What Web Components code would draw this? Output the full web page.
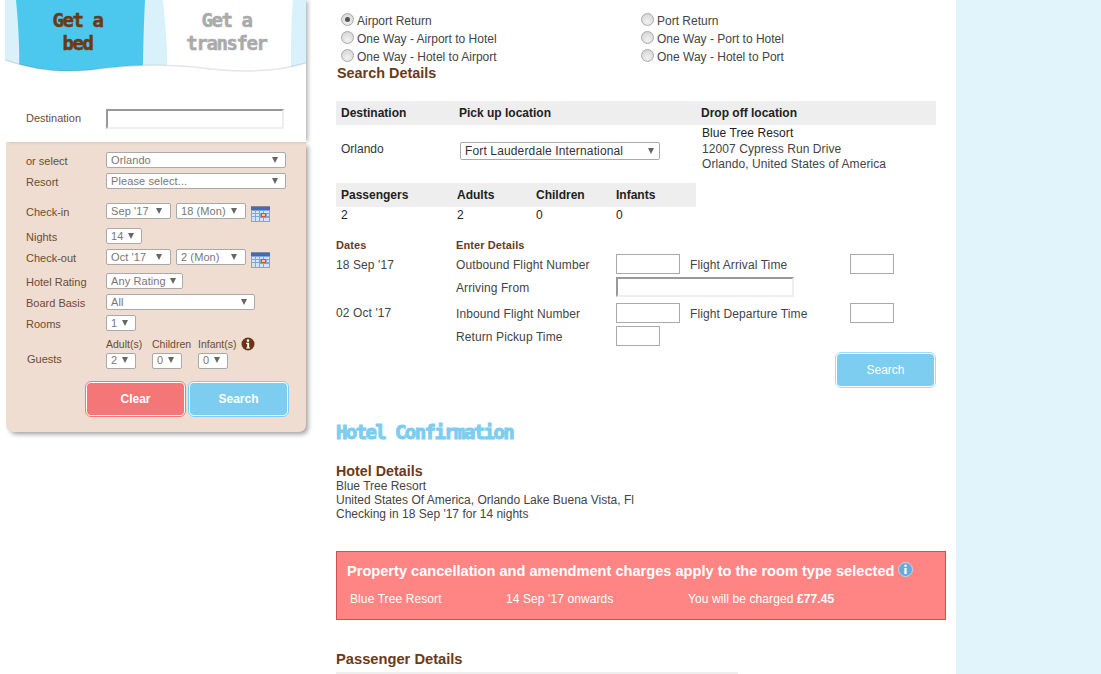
<!DOCTYPE html>
<html><head><meta charset="utf-8"><style>
html,body{margin:0;padding:0;height:674px;overflow:hidden;background:#fff;font-family:"Liberation Sans",Arial,sans-serif}
</style></head><body>
<x-page>
  <x-sidebar slot="side"></x-sidebar>
  <x-main slot="main"></x-main>
</x-page>
<script>
function def(name,html){customElements.define(name,class extends HTMLElement{connectedCallback(){if(this.shadowRoot)return;const s=this.attachShadow({mode:'open'});s.innerHTML=typeof html==='function'?html(this):html;}});}

def('x-page',`<style>:host{display:flex;width:1101px;height:674px;overflow:hidden}
.side{flex:0 0 336px}.main{flex:0 0 620px}.right{flex:1;background:#e1f3fb}</style>
<div class="side"><slot name="side"></slot></div><div class="main"><slot name="main"></slot></div><div class="right"></div>`);

def('x-select',h=>{const w=h.getAttribute('w'),t=h.getAttribute('t');const a=h.getAttribute('a')||8;const big=h.hasAttribute('big');
return `<style>:host{display:block;flex:none}
.s{box-sizing:border-box;width:${w}px;height:${big?18:16}px;border:1px solid #a9a9a9;border-radius:2px;background:#fff;display:flex;align-items:center;justify-content:space-between;padding:0 ${a}px 0 4px;font:${big?12:11}px/14px "Liberation Sans",Arial,sans-serif;color:${big?'#333':'#777'};white-space:nowrap;${big?'letter-spacing:.14px;':'padding-bottom:1px;letter-spacing:.1px;'}}
i{width:0;height:0;border-left:3.5px solid transparent;border-right:3.5px solid transparent;border-top:6.5px solid #666;flex:none}</style>
<div class="s"><span>${t}</span><i></i></div>`});

def('x-row',h=>`<style>:host{display:flex;align-items:flex-start;height:16px;padding-left:26px;margin-top:${h.getAttribute('mt')||0}px}
.l{flex:0 0 80px;font:11px/16px "Liberation Sans",Arial,sans-serif;color:#6d4c33;padding-top:1px}.c{display:flex;gap:5px}</style>
<div class="l">${h.getAttribute('label')}</div><div class="c"><slot></slot></div>`);

def('x-calendar',`<style>:host{display:block;flex:none;margin-top:3px;height:16px}svg{display:block}</style>
<svg width="19" height="16" viewBox="0 0 19 16"><rect width="19" height="16" fill="#7fa6dc"/><rect y="0" width="19" height="1" fill="#889"/><rect y="1" width="19" height="3" fill="#3f6cb4"/>
<g fill="#d5e3f6"><rect x="1" y="5" width="3" height="2"/><rect x="5" y="5" width="3" height="2"/><rect x="9" y="5" width="3" height="2"/><rect x="13" y="5" width="5" height="2"/><rect x="1" y="8" width="3" height="2"/><rect x="5" y="8" width="3" height="2"/><rect x="1" y="11" width="3" height="4"/><rect x="5" y="11" width="3" height="4"/><rect x="9" y="12" width="3" height="3"/><rect x="16" y="8" width="2" height="2"/><rect x="13" y="12" width="5" height="3"/></g>
<rect x="10.500" y="7.500" width="4" height="3" fill="#f6c9a8" stroke="#d9502e"/></svg>`);

def('x-btn',h=>{const c=h.getAttribute('c'),e=h.getAttribute('e');const bold=h.hasAttribute('bold');return `<style>:host{display:block;flex:none}
.o{box-sizing:border-box;width:${h.getAttribute('w')||101}px;height:36px;border:1px solid ${e};border-radius:6px;padding:1px;background:#fff}
.b{box-sizing:border-box;height:100%;border-radius:4px;background:${c};color:#fff;font:${bold?'bold':'normal'} 12px/32px "Liberation Sans",Arial,sans-serif;text-align:center;}</style>
<div class="o"><div class="b"><slot></slot></div></div>`});

def('x-sidebar',`<style>:host{display:block;width:336px;height:674px;font-family:"Liberation Sans",Arial,sans-serif}
.panel{margin-left:5px;width:301px;position:relative}
.tabs{position:relative;height:142px;box-shadow:3px 0 4px -1px rgba(0,0,0,.3)}
.tabs svg{position:absolute;left:0;top:0}
.tt{position:relative;display:flex;padding-top:9px}
.t{font:bold 19px/23px "DejaVu Sans Mono",monospace;letter-spacing:-1.4px;text-align:center;-webkit-text-stroke:.5px currentColor;white-space:nowrap}
.t1{width:145px;color:#6b3a14}.t2{width:123px;margin-left:15px;color:#aaa}
.dest{position:absolute;left:0;top:109px;display:flex;padding-left:21px}
.dest label{flex:0 0 80px;font:11px/19px "Liberation Sans",Arial,sans-serif;color:#6d4c33}
.inp{box-sizing:border-box;width:178px;height:20px;border:2px solid;border-color:#999 #eee #eee #999;background:#fff}
.body{margin-left:1px;width:300px;height:290px;background:#eeddd0;border-radius:0 0 7px 7px;box-shadow:3px 3px 5px -1px rgba(0,0,0,.4);padding-top:10px;box-sizing:border-box}
x-row{margin-left:-6px}
.g{display:flex;height:31px;margin-top:6.500px;padding-left:20px}
.g .gl{flex:0 0 79px;padding-left:1px;font:11px/13px "Liberation Sans",Arial,sans-serif;color:#6d4c33;padding-top:15px}
.gc{display:flex;gap:16px}.gc>div{width:30px}
.gc span{display:block;font:10.500px/12px "Liberation Sans",Arial,sans-serif;color:#6d4c33;white-space:nowrap;height:15px}
.info{position:relative}
.info svg{position:absolute;left:43px;top:-1px}
.btns{display:flex;gap:2px;padding-left:79px;margin-top:12px}
</style>
<div class="panel">
 <div class="tabs">
  <svg width="301" height="142" viewBox="0 0 301 142"><rect width="301" height="142" fill="#fff"/>
   <rect width="301" height="72" fill="#d9f1fa"/>
   <path d="M11 0 C13 20 15 50 14 72 L138 72 C138 50 139 20 140 0Z" fill="#4cc8ee"/>
   <path d="M158 0 C160 20 163 50 162 72 L286 72 C286 50 286 20 288 0Z" fill="#fff"/>
   <path d="M0 60 C30 70 55 73 85 70 C115 66 150 63 190 67 C225 72 265 74 301 63 L301 142 L0 142Z" fill="#fff"/>
   <path d="M0 60 C30 70 55 73 85 70 C115 66 150 63 190 67 C225 72 265 74 301 63" fill="none" stroke="#000" stroke-opacity=".1" stroke-width="1.500"/>
  </svg>
  <div class="tt"><div class="t t1">Get a<br>bed</div><div class="t t2">Get a<br>transfer</div></div>
  <div class="dest"><label>Destination</label><div class="inp"></div></div>
 </div>
 <div class="body">
  <x-row label="or select"><x-select w="180" t="Orlando" a="7"></x-select></x-row>
  <x-row label="Resort" mt="5"><x-select w="180" t="Please select..." a="7"></x-select></x-row>
  <x-row label="Check-in" mt="14"><x-select w="65" t="Sep '17"></x-select><x-select w="70" t="18 (Mon)"></x-select><x-calendar></x-calendar></x-row>
  <x-row label="Nights" mt="9"><x-select w="36" t="14" a="7"></x-select></x-row>
  <x-row label="Check-out" mt="5"><x-select w="65" t="Oct '17"></x-select><x-select w="70" t="2 (Mon)"></x-select><x-calendar></x-calendar></x-row>
  <x-row label="Hotel Rating" mt="8"><x-select w="77" t="Any Rating" a="6"></x-select></x-row>
  <x-row label="Board Basis" mt="5"><x-select w="149" t="All" a="7"></x-select></x-row>
  <x-row label="Rooms" mt="5"><x-select w="30" t="1" a="7"></x-select></x-row>
  <div class="g"><div class="gl">Guests</div><div class="gc">
    <div><span>Adult(s)</span><x-select w="30" t="2" a="7"></x-select></div>
    <div><span>Children</span><x-select w="30" t="0" a="7"></x-select></div>
    <div class="info"><span>Infant(s)</span><svg width="14" height="14" viewBox="0 0 14 14"><circle cx="7" cy="7" r="6.500" fill="#6b3412"/><circle cx="7" cy="3.600" r="1.300" fill="#fff"/><path d="M5.200 5.700h2.900v4.700h1v1.200H5.200v-1.200h1V6.900h-1z" fill="#fff"/></svg><x-select w="30" t="0" a="7"></x-select></div>
  </div></div>
  <div class="btns"><x-btn c="#f47676" e="#f47676" bold>Clear</x-btn><x-btn c="#7ccdf0" e="#7ccdf0" bold>Search</x-btn></div>
 </div>
</div>`);

def('x-radio',h=>`<style>:host{display:flex;align-items:center;height:18px;font:12px/18px "Liberation Sans",Arial,sans-serif;color:#444;white-space:nowrap}
.r{box-sizing:border-box;width:13px;height:13px;border-radius:50%;border:1px solid #aaa;background:radial-gradient(circle at 50% 70%,#f2f2f2,#cfcfcf);margin:-3px 3px 0 5px;display:flex;align-items:center;justify-content:center}
.r b{width:5px;height:5px;border-radius:50%;background:${h.hasAttribute('on')?'#555':'transparent'}}</style>
<div class="r"><b></b></div><slot></slot>`);

const H2=`font-weight:bold;line-height:16px;font-family:"Liberation Sans",Arial,sans-serif;color:#6b3a1a`;

def('x-trip',`<style>:host{display:grid;grid-template-columns:300px 300px;grid-auto-rows:18px;padding-top:12px}</style>
<x-radio on>Airport Return</x-radio><x-radio>Port Return</x-radio>
<x-radio>One Way - Airport to Hotel</x-radio><x-radio>One Way - Port to Hotel</x-radio>
<x-radio>One Way - Hotel to Airport</x-radio><x-radio>One Way - Hotel to Port</x-radio>`);

def('x-search',`<style>:host{display:block;font:12px/16px "Liberation Sans",Arial,sans-serif;color:#444}
h2{${H2};font-size:14.4px;margin:-1px 0 0 1px}
.hd{display:grid;background:#eee;font-weight:bold;color:#222;height:24px;line-height:24px;align-items:center}
.t1{grid-template-columns:118px 242px 1fr;width:600px;margin-top:20px;padding-left:5px;box-sizing:border-box}
.r1{display:grid;grid-template-columns:119px 242px 1fr;padding-left:5px;height:58px}
.r1>.o{padding-top:16px;color:#333}
.r1 x-select{margin-top:17px}
.addr{line-height:15.500px;padding-top:1px;letter-spacing:.08px}.addr b{font-weight:normal;color:#222}
.t2{grid-template-columns:116px 79px 80px 1fr;width:360px;padding-left:5px;box-sizing:border-box}
.r2{display:grid;grid-template-columns:116px 79px 80px 1fr;padding-left:5px;color:#222;height:16px}
.f{display:grid;grid-template-columns:120px 160px 74px 204px;margin-top:14px;letter-spacing:.1px}
.f>div{white-space:nowrap}
.lb{font:bold 11px/16px "Liberation Sans",Arial,sans-serif;color:#6b3a1a}
.v{height:23px;display:flex;align-items:center}
.p{height:26px;box-sizing:border-box;padding-top:4px}
.i{box-sizing:border-box;height:20px;border:1px solid #aaa;background:#fff;width:64px;margin-bottom:2px}
.s{width:44px}
.inset{width:178px;border:2px solid;border-color:#999 #eee #eee #999}
.lab{width:160px}
.end{display:flex;justify-content:flex-end;width:600px;margin-top:4px}
</style>
<h2>Search Details</h2>
<div class="hd t1"><div>Destination</div><div>Pick up location</div><div>Drop off location</div></div>
<div class="r1"><div class="o">Orlando</div><div><x-select big w="200" t="Fort Lauderdale International" a="5"></x-select></div><div class="addr"><b>Blue Tree Resort</b><br>12007 Cypress Run Drive<br>Orlando, United States of America</div></div>
<div class="hd t2"><div>Passengers</div><div>Adults</div><div>Children</div><div>Infants</div></div>
<div class="r2"><div>2</div><div>2</div><div>0</div><div>0</div></div>
<div class="f">
 <div class="lb">Dates</div><div class="lb" style="grid-column:2/5">Enter Details</div>
 <div class="v">18 Sep '17</div><div class="v">Outbound Flight Number</div><div class="v"><div class="i"></div></div><div class="v"><span class="lab">Flight Arrival Time</span><div class="i s"></div></div>
 <div class="v"></div><div class="v">Arriving From</div><div class="v" style="grid-column:3/5"><div class="i inset"></div></div>
 <div class="v p" style="padding-top:2px">02 Oct '17</div><div class="v p">Inbound Flight Number</div><div class="v p"><div class="i"></div></div><div class="v p"><span class="lab">Flight Departure Time</span><div class="i s"></div></div>
 <div class="v"></div><div class="v">Return Pickup Time</div><div class="v"><div class="i s"></div></div><div class="v"></div>
</div>
<div class="end"><x-btn c="#7ccdf0" e="#9fdcf5" w="101">Search</x-btn></div>`);

def('x-hotel',`<style>:host{display:block;font:12px/14px "Liberation Sans",Arial,sans-serif;color:#444}
h1{margin:33px 0 0;font:bold 19px/22px "DejaVu Sans Mono",monospace;color:#7ccdf0;-webkit-text-stroke:1px #7ccdf0;letter-spacing:-1.6px;white-space:nowrap}
h2{${H2};font-size:14.3px;margin:20px 0 0}
</style><h1>Hotel Confirmation</h1><h2>Hotel Details</h2><div>Blue Tree Resort<br>United States Of America, Orlando Lake Buena Vista, Fl<br>Checking in 18 Sep '17 for 14 nights</div>`);

def('x-alert',`<style>:host{display:block;box-sizing:border-box;width:610px;height:69px;margin-top:30px;background:#ff8585;border:1px solid #d44f4f;color:#fff;font:12px/14px "Liberation Sans",Arial,sans-serif}
.t{font:bold 14.6px/16px "Liberation Sans",Arial,sans-serif;padding:11px 0 0 10px;display:flex;gap:4px;align-items:flex-start;white-space:nowrap}
.t svg{flex:none;margin-top:-1px}
.r{display:grid;grid-template-columns:156px 182px 1fr;padding:13px 0 0 13px;letter-spacing:.1px}</style>
<div class="t"><span>Property cancellation and amendment charges apply to the room type selected</span><svg width="15" height="15" viewBox="0 0 15 15"><circle cx="7.500" cy="7.500" r="7" fill="#68aadb" stroke="#bcd9ee" stroke-width="1"/><circle cx="7.500" cy="3.800" r="1.200" fill="#fff"/><rect x="6.400" y="6" width="2.200" height="6" fill="#fff"/></svg></div>
<div class="r"><div>Blue Tree Resort</div><div>14 Sep '17 onwards</div><div>You will be charged <b>£77.45</b></div></div>`);

def('x-passenger',`<style>:host{display:block}h2{${H2};font-size:14.7px;margin:31px 0 0;height:21px;width:402px;border-bottom:2px solid #eee}</style><h2>Passenger Details</h2>`);

def('x-main',`<style>:host{display:block;width:620px;height:674px;overflow:hidden}</style>
<x-trip></x-trip><x-search></x-search><x-hotel></x-hotel><x-alert></x-alert><x-passenger></x-passenger>`);
</script>
</body></html>
